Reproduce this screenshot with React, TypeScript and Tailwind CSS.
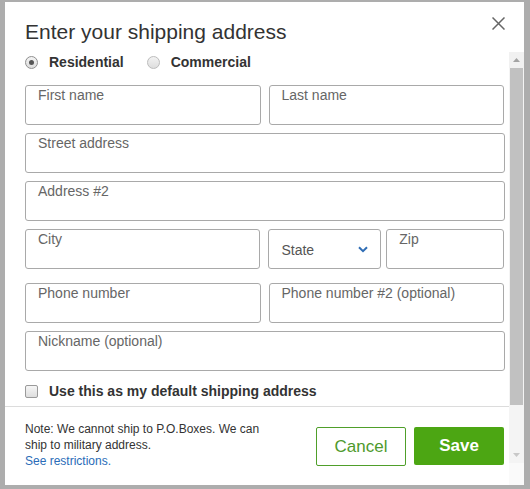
import React from "react";

const font = { fontFamily: '"Liberation Sans", Arial, sans-serif' };

function Field({ label, className = "" }: { label: string; className?: string }) {
  return (
    <div
      className={`h-[40px] rounded-[3px] border border-[#a9a9a9] bg-white pl-[12px] pt-[1px] text-[14px] leading-[16px] text-[#666] ${className}`}
    >
      {label}
    </div>
  );
}

export default function App() {
  return (
    <div style={font} className="h-[489px] w-[530px] overflow-hidden bg-[#adadad] pl-[5px] pt-[2px]">
      <div className="flex h-[483px] w-[519px] flex-col bg-white">
        {/* header */}
        <div className="flex h-[50px] shrink-0 items-start justify-between pl-[20px] pr-[19px]">
          <div className="pt-[18px] text-[21px] leading-[24px] text-[#333]">Enter your shipping address</div>
          <svg width="13" height="13" viewBox="0 0 13 13" className="mt-[15px]">
            <path d="M0.5 0.5 L12.5 12.5 M12.5 0.5 L0.5 12.5" stroke="#666" strokeWidth="1.5" />
          </svg>
        </div>
        {/* body + scrollbar */}
        <div className="flex min-h-0 flex-1">
          <div className="flex w-[504px] flex-col">
            <div className="flex h-[354px] flex-col pl-[20px] pr-[5px]">
              {/* radios */}
              <div className="mt-[2px] flex h-[16px] items-center text-[14px] font-bold text-[#333]">
                <span className="flex h-[13px] w-[13px] items-center justify-center rounded-full border border-[#8f8f8f] bg-gradient-to-b from-[#f4f4f4] to-[#dcdcdc]">
                  <span className="h-[5px] w-[5px] rounded-full bg-[#555]" />
                </span>
                <span className="ml-[11px]">Residential</span>
                <span className="ml-[23px] h-[13px] w-[13px] rounded-full border border-[#bcbcbc] bg-gradient-to-b from-[#f2f2f2] to-[#dedede]" />
                <span className="ml-[11px]">Commercial</span>
              </div>
              <div className="mt-[15px] flex flex-col">
                <div className="flex gap-[8px]">
                  <Field label="First name" className="w-[236px]" />
                  <Field label="Last name" className="w-[236px]" />
                </div>
                <Field label="Street address" className="mt-[8px] w-[480px]" />
                <Field label="Address #2" className="mt-[8px] w-[480px]" />
                <div className="mt-[8px] flex">
                  <Field label="City" className="w-[236px]" />
                  <div className="ml-[8px] flex h-[40px] w-[113px] items-center justify-between rounded-[3px] border border-[#a9a9a9] pl-[12px] pr-[12px] text-[14px] text-[#555]">
                    <span className="pt-[2px]">State</span>
                    <svg width="10" height="7" viewBox="0 0 10 7">
                      <path d="M1 1.2 L5 5.2 L9 1.2" fill="none" stroke="#2f6db5" strokeWidth="2" />
                    </svg>
                  </div>
                  <Field label="Zip" className="ml-[5px] w-[118px]" />
                </div>
                <div className="mt-[14px] flex gap-[8px]">
                  <Field label="Phone number" className="w-[236px]" />
                  <Field label="Phone number #2 (optional)" className="w-[236px]" />
                </div>
                <Field label="Nickname (optional)" className="mt-[8px] w-[480px]" />
                <div className="mt-[12px] flex h-[16px] items-center text-[14px] font-bold text-[#333]">
                  <span className="h-[13px] w-[13px] rounded-[2px] border border-[#9a9a9a] bg-gradient-to-b from-[#f6f6f6] to-[#dedede]" />
                  <span className="ml-[11px]">Use this as my default shipping address</span>
                </div>
              </div>
            </div>
            {/* footer */}
            <div className="flex h-[79px] items-start justify-between border-t border-[#dcdcdc] pl-[20px] pr-[5px]">
              <div className="pt-[14px] text-[12px] leading-[16px] text-[#333]">
                <div>Note: We cannot ship to P.O.Boxes. We can</div>
                <div>ship to military address.</div>
                <div className="text-[#2a6cb8]">See restrictions.</div>
              </div>
              <div className="mt-[20px] flex gap-[8px]">
                <div className="flex h-[39px] w-[90px] items-center justify-center rounded-[2px] border border-[#4f9f2a] text-[17px] text-[#4e9a2c]">
                  Cancel
                </div>
                <div className="flex h-[38px] w-[90px] items-center justify-center rounded-[2px] bg-[#4ca613] text-[17px] font-bold text-white">
                  Save
                </div>
              </div>
            </div>
          </div>
          {/* scrollbar */}
          <div className="flex w-[15px] flex-col bg-[#f4f4f4]">
            <div className="flex h-[16px] items-center justify-center bg-[#f1f1f1]">
              <svg width="7" height="4" viewBox="0 0 7 4">
                <path d="M0 4 L3.5 0 L7 4 Z" fill="#a3a3a3" />
              </svg>
            </div>
            <div className="mx-[1px] h-[337px] bg-[#c1c1c1]" />
            <div className="flex h-[58px] items-end justify-center pb-[6px]">
              <svg width="7" height="4" viewBox="0 0 7 4">
                <path d="M0 0 L3.5 4 L7 0 Z" fill="#c8c8c8" />
              </svg>
            </div>
            <div className="flex-1 bg-[#fafafa]" />
          </div>
        </div>
      </div>
    </div>
  );
}
